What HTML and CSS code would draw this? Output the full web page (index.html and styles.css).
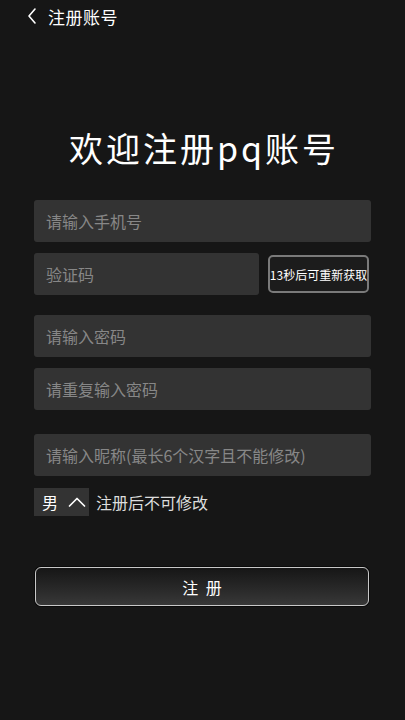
FILE: index.html
```html
<!DOCTYPE html>
<html lang="zh">
<head>
<meta charset="utf-8">
<link rel="stylesheet" href="styles.css">
</head>
<body>
<div class="page">
  <header class="topbar">
    <svg class="back" width="12" height="18" viewBox="0 0 12 18"><path d="M9 2 L3 9 L9 16" fill="none" stroke="#fff" stroke-width="1.6" stroke-linecap="round" stroke-linejoin="round"/></svg>
    <span class="topbar-title">注册账号</span>
  </header>
  <h1 class="welcome">欢迎注册pq账号</h1>
  <form class="form">
    <div class="field f-phone"><span class="ph">请输入手机号</span></div>
    <div class="code-row">
      <div class="field f-code"><span class="ph">验证码</span></div>
      <div class="code-btn">13秒后可重新获取</div>
    </div>
    <div class="field f-pwd"><span class="ph">请输入密码</span></div>
    <div class="field f-pwd2"><span class="ph">请重复输入密码</span></div>
    <div class="field f-nick"><span class="ph">请输入昵称(最长6个汉字且不能修改)</span></div>
    <div class="gender-row">
      <div class="gender">
        <span>男</span>
        <svg width="18" height="12" viewBox="0 0 18 12"><path d="M1.5 10 L9 2.5 L16.5 10" fill="none" stroke="#fff" stroke-width="1.7" stroke-linecap="round" stroke-linejoin="round"/></svg>
      </div>
      <span class="gender-note">注册后不可修改</span>
    </div>
    <div class="submit">注 册</div>
  </form>
</div>
</body>
</html>
```

FILE: styles.css
```css
html, body {
  margin: 0;
  padding: 0;
  background: #161616;
  height: 100%;
}
body {
  font-family: "Noto Sans CJK SC", "Noto Sans", sans-serif;
  color: #fff;
}
.page {
  display: flex;
  flex-direction: column;
  min-height: 720px;
}
.topbar {
  height: 32px;
  display: flex;
  align-items: center;
  padding-left: 26px;
  box-sizing: border-box;
}
.back {
  display: block;
  margin-right: 10px;
}
.topbar-title {
  font-size: 17px;
  letter-spacing: 0.5px;
  line-height: 1;
}
.welcome {
  margin: 93px 0 0 0;
  height: 46px;
  line-height: 46px;
  text-align: center;
  font-weight: normal;
  font-size: 34px;
  letter-spacing: 3px;
  text-indent: 3px;
}
.form {
  margin-top: 29px;
  padding: 0 34px;
  display: flex;
  flex-direction: column;
}
.field {
  height: 42px;
  background: #333333;
  border-radius: 3px;
  display: flex;
  align-items: center;
  padding-left: 12px;
  box-sizing: border-box;
}
.ph {
  font-size: 16px;
  color: #878787;
}
.code-row {
  display: flex;
  align-items: center;
  margin-top: 11px;
}
.f-code {
  width: 225px;
}
.code-btn {
  margin-left: 9px;
  width: 101px;
  height: 38px;
  box-sizing: border-box;
  border: 2px solid #7a7a7a;
  border-radius: 5px;
  background: #1c1c1c;
  display: flex;
  align-items: center;
  justify-content: center;
  font-size: 12px;
  white-space: nowrap;
  overflow: visible;
  letter-spacing: 0;
}
.f-pwd { margin-top: 20px; }
.f-pwd2 { margin-top: 11px; }
.f-nick { margin-top: 24px; }
.gender-row {
  margin-top: 12px;
  display: flex;
  align-items: center;
}
.gender {
  width: 55px;
  height: 28px;
  background: #333333;
  display: flex;
  align-items: center;
  padding-left: 8px;
  box-sizing: border-box;
  font-size: 16px;
  gap: 10px;
}
.gender svg { display: block; }
.gender-note {
  margin-left: 7px;
  font-size: 16px;
  color: #dddddd;
}
.submit {
  margin: 51px 2px 0 1px;
  height: 39px;
  box-sizing: border-box;
  border: 1.5px solid #c8c8c8;
  border-radius: 6px;
  background: linear-gradient(to bottom, #161616 0%, #2a2a2a 60%, #383838 100%);
  box-shadow: 0 0 0 1px #0a0a0a;
  display: flex;
  align-items: center;
  justify-content: center;
  font-size: 16px;
  letter-spacing: 2px;
  text-indent: 2px;
}
```
